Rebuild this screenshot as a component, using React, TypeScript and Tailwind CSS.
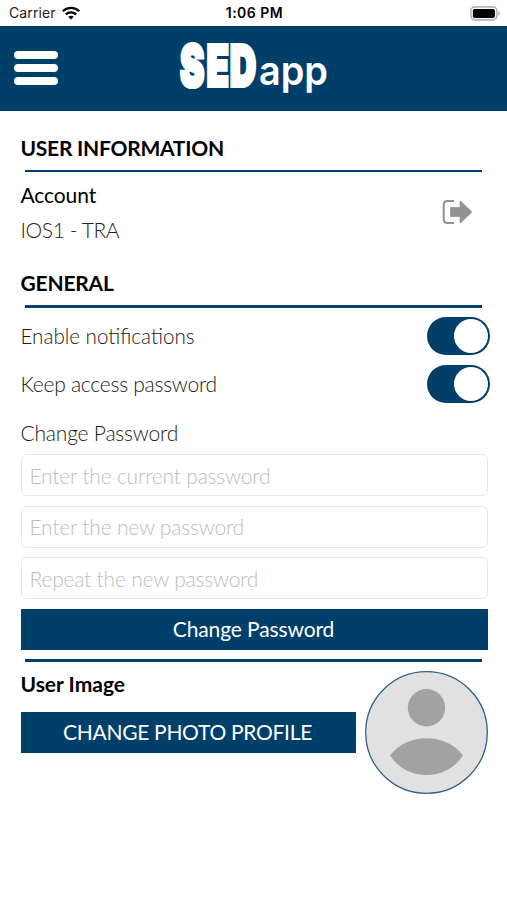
import React from 'react';

const Divider = () => <div className="ml-[4.5px] mr-[5.5px] h-[2.5px] bg-[#003f69]" />;

const Toggle = () => (
  <button className="flex h-[38px] w-[63px] items-center justify-end rounded-full bg-[#003f69] pr-[2px]">
    <span className="h-[34px] w-[34px] rounded-full bg-white" />
  </button>
);

const PasswordField = ({ label }: { label: string }) => (
  <input
    type="password"
    placeholder={label}
    className="block h-[42px] w-full rounded-[6px] border border-[#e9e9e9] px-2 text-[21px] font-light tracking-[-0.2px] outline-none placeholder:text-[#bdbdbd]"
  />
);

const StatusBar = () => (
  <div className="grid h-[25.5px] grid-cols-3 items-center pl-[9px] pr-[7px] pt-[1px] font-[Inter] text-black">
    <div className="flex items-center">
      <span className="text-[14px] leading-none tracking-[0.1px] text-[#222]">Carrier</span>
      {/* wifi */}
      <svg className="ml-[6px] h-[14px] w-[18px]" viewBox="0 0 18 14" fill="none" stroke="black" strokeWidth="2.3">
        <path d="M.7 5.3C5.4.7 12.6.7 17.3 5.3" />
        <path d="M3.8 8.4C6.7 5.6 11.3 5.6 14.2 8.4" />
        <path d="M9 13.6 6.3 10.8C7.8 9.4 10.2 9.4 11.7 10.8Z" fill="black" stroke="none" />
      </svg>
    </div>
    <span className="whitespace-nowrap text-center text-[14px] font-semibold leading-none tracking-[0.5px]">1:06 PM</span>
    {/* battery */}
    <svg className="h-[15px] w-[30px] justify-self-end" viewBox="0 0 30 15">
      <rect x=".9" y=".9" width="26" height="13" rx="3.8" fill="white" stroke="#b5b5b5" strokeWidth="1.6" />
      <rect x="2.9" y="2.9" width="22" height="9" rx="1.6" fill="black" />
      <path d="M28.4 5.3v4.4c2-.9 2-3.5 0-4.4Z" fill="#a8a8a8" />
    </svg>
  </div>
);

const Header = () => (
  <header className="grid h-[85px] grid-cols-[1fr_148px_1fr] items-center bg-[#003f69]">
    <button className="ml-[14px] flex w-[44px] flex-col gap-[4.5px]">
      <span className="h-[8.5px] rounded-full bg-white" />
      <span className="h-[8.5px] rounded-full bg-white" />
      <span className="h-[8.5px] rounded-full bg-white" />
    </button>
    <svg className="h-[85px] w-[148px] overflow-visible" viewBox="0 0 148 85" fill="white">
      <text
        x="0.5 42 78"
        transform="translate(0 59.6) scale(.64 1)"
        fontFamily="Inter, sans-serif"
        fontWeight="900"
        fontSize="56"
        stroke="white"
        strokeWidth="4.2"
        strokeLinejoin="miter"
      >
        SED
      </text>
      <text
        x="79"
        y="59"
        fontFamily="Inter, sans-serif"
        fontWeight="600"
        fontSize="40"
        textLength="69"
        lengthAdjust="spacingAndGlyphs"
      >
        app
      </text>
    </svg>
  </header>
);

const App = () => {
  return (
    <div className="h-[900px] w-full overflow-hidden bg-white font-[Lato,sans-serif] text-[21px] leading-[26px] text-black">
      <StatusBar />
      <Header />

      <main className="pl-[20.5px] pr-[19.5px]">
        {/* User information */}
        <h2 className="pb-[9px] pt-[24px] font-bold tracking-[-0.25px]">USER INFORMATION</h2>
        <Divider />
        <div className="flex h-[98px] items-start justify-between pt-[10px]">
          <div>
            <p className="tracking-[-0.1px]">Account</p>
            <p className="mt-[9px] font-light tracking-[-0.4px] text-[#222]">IOS1 - TRA</p>
          </div>
          <svg className="mr-[16px] mt-[17px] h-[26px] w-[31px]" viewBox="0 0 31 26">
            <path d="M13 2H6.5Q2.7 2 2.7 6V20Q2.7 24 6.5 24H13" fill="none" stroke="#929292" strokeWidth="2" />
            <path d="M9.5 8.5H19V2.8Q19 1.6 20 2.5L30 12Q30.8 13 30 14L20 23.5Q19 24.4 19 23.2V17.5H9.5Z" fill="#929292" stroke="#929292" strokeWidth=".7" />
          </svg>
        </div>

        {/* General */}
        <h2 className="pb-[9px] font-bold tracking-[-0.2px]">GENERAL</h2>
        <Divider />
        <div className="-mr-[2.5px] mt-[9.5px] flex items-center justify-between">
          <span className="text-[20.6px] font-light text-[#1a1a1a]">Enable notifications</span>
          <Toggle />
        </div>
        <div className="-mr-[2.5px] mt-[10px] flex items-center justify-between">
          <span className="font-light tracking-[-0.25px] text-[#1a1a1a]">Keep access password</span>
          <Toggle />
        </div>
        <p className="mb-[8px] mt-[17px] font-light tracking-[-0.2px] text-[#1a1a1a]">Change Password</p>
        <div className="flex flex-col gap-[9.5px]">
          <PasswordField label="Enter the current password" />
          <PasswordField label="Enter the new password" />
          <PasswordField label="Repeat the new password" />
          <button className="h-[41px] bg-[#003f69] pr-[1px] tracking-[-0.12px] text-white">Change Password</button>
          <Divider />
        </div>

        {/* User image */}
        <div className="mt-[9px] flex justify-between">
          <div className="w-[335px]">
            <h3 className="mb-[15px] font-bold">User Image</h3>
            <button className="h-[41px] w-full bg-[#003f69] pr-[1px] tracking-[-0.3px] text-white">CHANGE PHOTO PROFILE</button>
          </div>
          <svg className="h-[123px] w-[123px]" viewBox="0 0 123 123">
            <circle cx="61.5" cy="61.5" r="60.8" fill="#e1e1e1" stroke="#2c6289" strokeWidth="1.3" />
            <circle cx="61.5" cy="36.8" r="18.7" fill="#a2a2a2" />
            <path d="M25 84.5C42 61.5 81 61.5 98 84.5C81 110.5 42 110.5 25 84.5Z" fill="#a2a2a2" />
          </svg>
        </div>
      </main>
    </div>
  );
};

export default App;
